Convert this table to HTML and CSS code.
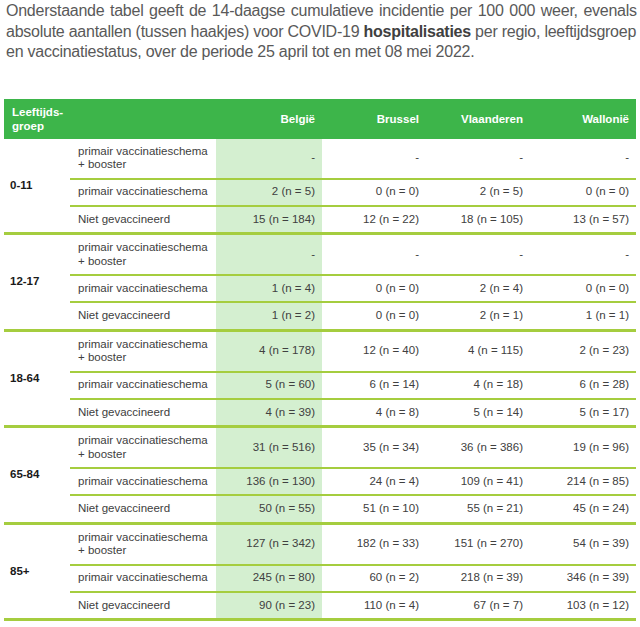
FILE: index.html
```html
<!DOCTYPE html>
<html lang="nl">
<head>
<meta charset="utf-8">
<title>Hospitalisaties per regio</title>
<link rel="stylesheet" href="styles.css">
</head>
<body>
<p class="intro"><span class="wide">Onderstaande tabel geeft de 14-daagse cumulatieve incidentie per 100 000 weer, evenals</span><br>absolute aantallen (tussen haakjes) voor COVID-19 <b>hospitalisaties</b> per regio, leeftijdsgroep<br>en vaccinatiestatus, over de periode 25 april tot en met 08 mei 2022.</p>
<table class="data">
<colgroup>
<col class="c-age"><col class="c-status"><col class="c-be"><col class="c-reg"><col class="c-reg"><col class="c-wal">
</colgroup>
<thead>
<tr><th class="age">Leeftijds-<br>groep</th><th></th><th class="num">België</th><th class="num">Brussel</th><th class="num">Vlaanderen</th><th class="num">Wallonië</th></tr>
</thead>
<tbody>
<tr class="r1"><td class="age" rowspan="3">0-11</td><td class="st">primair vaccinatieschema<br>+ booster</td><td class="num be">-</td><td class="num">-</td><td class="num">-</td><td class="num">-</td></tr>
<tr class="r2"><td class="st">primair vaccinatieschema</td><td class="num be">2 (n = 5)</td><td class="num">0 (n = 0)</td><td class="num">2 (n = 5)</td><td class="num">0 (n = 0)</td></tr>
<tr class="r3"><td class="st">Niet gevaccineerd</td><td class="num be">15 (n = 184)</td><td class="num">12 (n = 22)</td><td class="num">18 (n = 105)</td><td class="num">13 (n = 57)</td></tr>

<tr class="r1"><td class="age" rowspan="3">12-17</td><td class="st">primair vaccinatieschema<br>+ booster</td><td class="num be">-</td><td class="num">-</td><td class="num">-</td><td class="num">-</td></tr>
<tr class="r2"><td class="st">primair vaccinatieschema</td><td class="num be">1 (n = 4)</td><td class="num">0 (n = 0)</td><td class="num">2 (n = 4)</td><td class="num">0 (n = 0)</td></tr>
<tr class="r3"><td class="st">Niet gevaccineerd</td><td class="num be">1 (n = 2)</td><td class="num">0 (n = 0)</td><td class="num">2 (n = 1)</td><td class="num">1 (n = 1)</td></tr>

<tr class="r1"><td class="age" rowspan="3">18-64</td><td class="st">primair vaccinatieschema<br>+ booster</td><td class="num be">4 (n = 178)</td><td class="num">12 (n = 40)</td><td class="num">4 (n = 115)</td><td class="num">2 (n = 23)</td></tr>
<tr class="r2"><td class="st">primair vaccinatieschema</td><td class="num be">5 (n = 60)</td><td class="num">6 (n = 14)</td><td class="num">4 (n = 18)</td><td class="num">6 (n = 28)</td></tr>
<tr class="r3"><td class="st">Niet gevaccineerd</td><td class="num be">4 (n = 39)</td><td class="num">4 (n = 8)</td><td class="num">5 (n = 14)</td><td class="num">5 (n = 17)</td></tr>

<tr class="r1"><td class="age" rowspan="3">65-84</td><td class="st">primair vaccinatieschema<br>+ booster</td><td class="num be">31 (n = 516)</td><td class="num">35 (n = 34)</td><td class="num">36 (n = 386)</td><td class="num">19 (n = 96)</td></tr>
<tr class="r2"><td class="st">primair vaccinatieschema</td><td class="num be">136 (n = 130)</td><td class="num">24 (n = 4)</td><td class="num">109 (n = 41)</td><td class="num">214 (n = 85)</td></tr>
<tr class="r3"><td class="st">Niet gevaccineerd</td><td class="num be">50 (n = 55)</td><td class="num">51 (n = 10)</td><td class="num">55 (n = 21)</td><td class="num">45 (n = 24)</td></tr>

<tr class="r1"><td class="age" rowspan="3">85+</td><td class="st">primair vaccinatieschema<br>+ booster</td><td class="num be">127 (n = 342)</td><td class="num">182 (n = 33)</td><td class="num">151 (n = 270)</td><td class="num">54 (n = 39)</td></tr>
<tr class="r2"><td class="st">primair vaccinatieschema</td><td class="num be">245 (n = 80)</td><td class="num">60 (n = 2)</td><td class="num">218 (n = 39)</td><td class="num">346 (n = 39)</td></tr>
<tr class="r3"><td class="st">Niet gevaccineerd</td><td class="num be">90 (n = 23)</td><td class="num">110 (n = 4)</td><td class="num">67 (n = 7)</td><td class="num">103 (n = 12)</td></tr>
</tbody>
</table>
</body>
</html>
```
FILE: styles.css
```css
html, body {
  margin: 0;
  padding: 0;
  background: #ffffff;
}

body {
  font-family: "Liberation Sans", Arial, sans-serif;
  color: #404040;
}

.intro {
  margin: 0;
  padding: 1px 0 0 6px;
  font-size: 16px;
  line-height: 20.5px;
  letter-spacing: -0.25px;
  color: #595959;
  white-space: nowrap;
}

.intro .wide {
  word-spacing: 1.4px;
}

.intro b {
  color: #404040;
  font-weight: bold;
}

.data {
  margin: 36px 0 0 4px;
  width: 632px;
  border-collapse: separate;
  border-spacing: 0;
  table-layout: fixed;
  font-size: 11.5px;
}

.c-age { width: 66px; }
.c-status { width: 146px; }
.c-be { width: 106px; }
.c-reg { width: 104px; }
.c-wal { width: 106px; }

.data th {
  background: #3db54a;
  color: #ffffff;
  font-weight: bold;
  height: 40px;
  padding: 0 8px 0 8px;
  line-height: 14px;
  vertical-align: middle;
  box-sizing: border-box;
}

.data th.age {
  text-align: left;
  padding-left: 8px;
}

.data th.num,
.data td.num {
  text-align: right;
  padding-right: 7px;
}

.data td {
  padding: 0 7px 0 8px;
  line-height: 13.5px;
  vertical-align: middle;
  box-sizing: border-box;
  white-space: nowrap;
}

.data td.age {
  font-weight: bold;
  color: #1a1a1a;
  padding-left: 6px;
  border-bottom: 3px solid #a5cd3f;
}

.data td.be {
  background: #d4efd0;
}

.data .r1 td,
.data .r2 td {
  border-bottom: 2px solid #a5cd3f;
}

.data .r1 td.age {
  border-bottom: 3px solid #a5cd3f;
}

.data .r3 td {
  border-bottom: 3px solid #a5cd3f;
}

.data .r1 td { height: 41px; }
.data .r2 td { height: 27px; }
.data .r3 td { height: 28.5px; }
```
